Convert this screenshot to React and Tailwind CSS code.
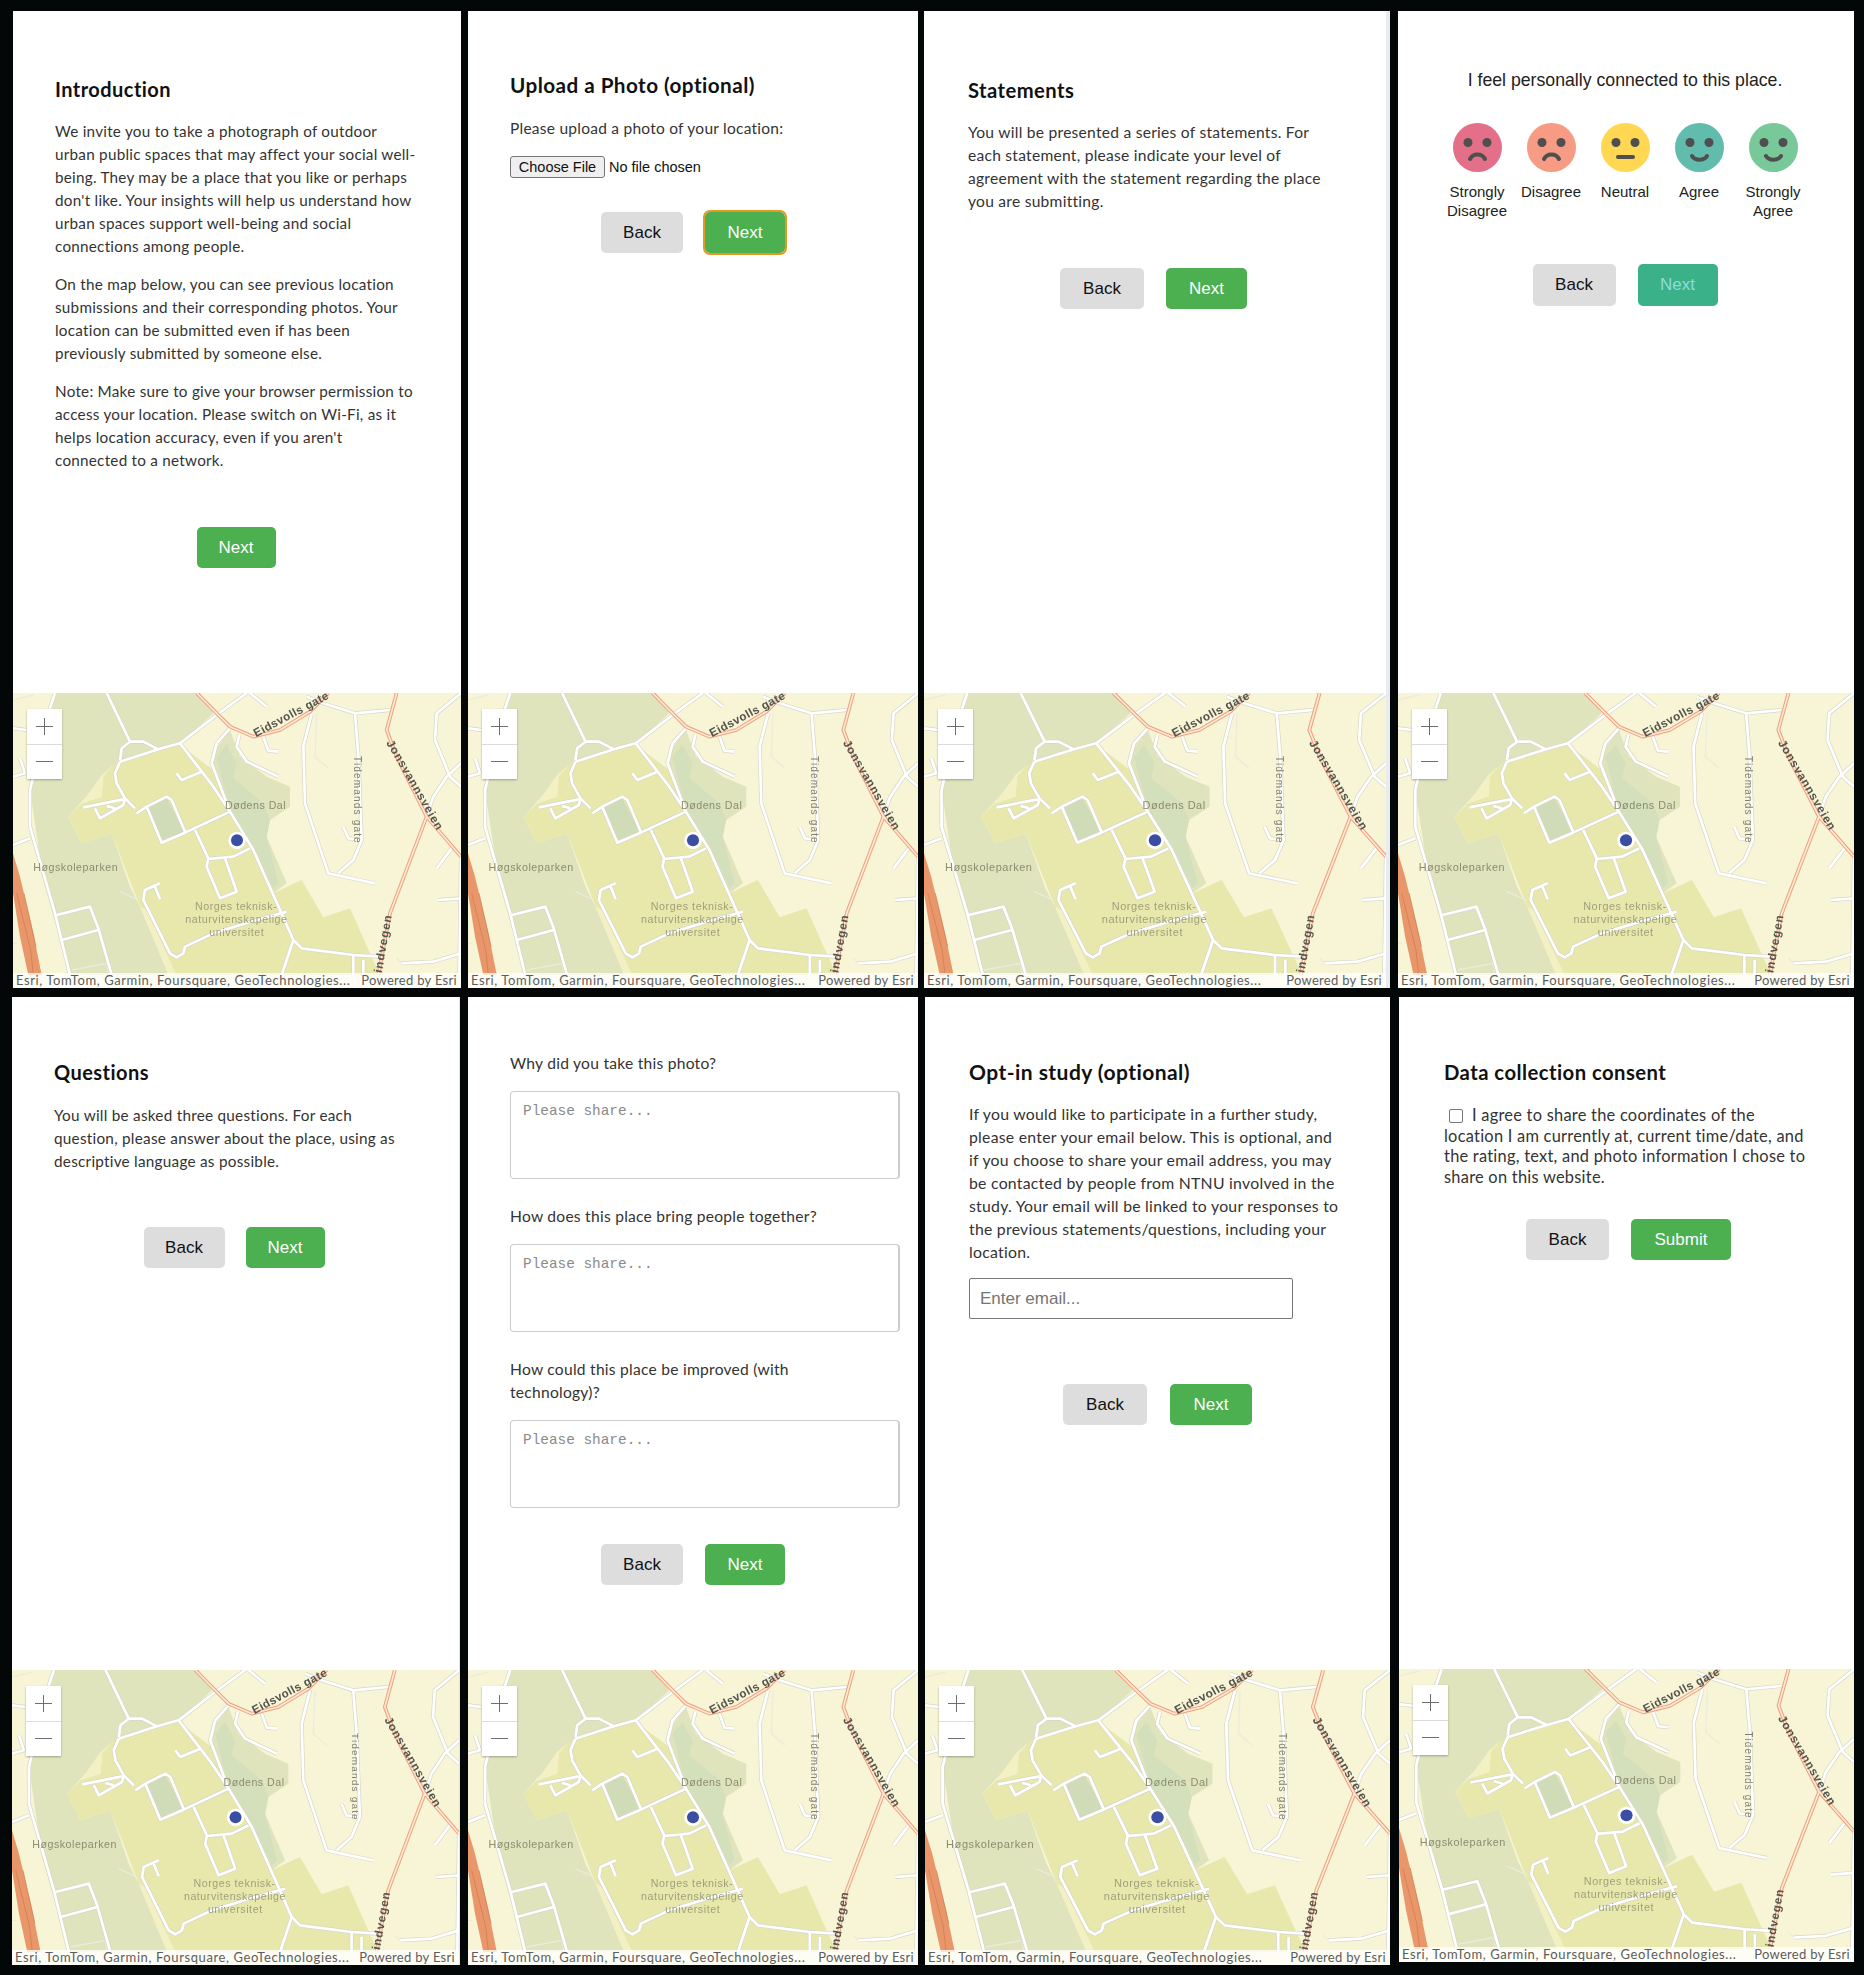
const roads = [
  '320,39 390,185',
  '360,240 365,205 390,185 430,185 475,208 540,190 650,105 740,39',
  '360,245 475,208',
  '360,245 345,280 350,310 375,355 405,385',
  '540,190 640,320 690,395 760,510 880,780 905,805 1060,825 1140,830',
  '250,382 370,358',
  '285,385 300,415 370,375 375,355',
  '320,378 345,385',
  '410,400 440,380 500,350 515,360 555,455',
  '440,380 485,488 555,458 690,395',
  '585,450 625,535 620,560 660,655 710,635 675,535',
  '625,537 700,530 750,505',
  '530,280 545,300 605,275',
  '480,610 435,630 430,660 510,820 530,832 550,820 555,800 640,760 770,720 860,695',
  '465,620 480,658',
  '690,145 650,190 635,250 690,395',
  '718,165 710,200 740,245 835,290',
  '790,170 805,212 835,215',
  '920,50 970,70 1065,100 1170,90',
  '935,100 910,200 915,370 985,580 1125,610',
  '1065,100 1075,225 1085,480 1060,540 1015,580',
  '1030,440 1045,475 1080,480',
  '1383,40 1310,100 1305,180 1350,290 1383,320',
  '1383,250 1340,290 1300,350 1280,410',
  '1355,505 1310,565',
  '1315,660 1383,655',
  '1205,850 1300,845 1383,820',
  '165,39 145,100 90,330 90,440 165,700 210,885',
  '39,145 80,150',
  '39,290 75,280 60,235',
  '39,495 90,475',
  '170,705 270,680 295,745 335,885',
  '185,780 295,750',
  '880,780 845,885',
  '1060,825 1060,885',
  '1090,840 1090,885',
  '1383,530 1378,885',
  '750,39 800,80',
]

const thinRoads = [
  '360,635 415,660',
  '950,100 945,230 985,265',
  '39,60 100,45',
  '1190,835 1205,850',
  '215,870 320,850 325,885',
  '39,790 52,790',
]

const mainRoads = [
  '590,39 650,100 690,140 760,170 840,150 930,95 985,39',
  '1190,39 1160,150 1190,230 1280,410 1383,530',
  '1280,410 1170,700 1135,885',
]

const MapView = ({ heightClass = 'h-[295px]' }) => (
  <div className={`relative shrink-0 overflow-hidden bg-[#f7f5d6] ${heightClass}`}>
    <svg viewBox="39 39 1344 885" preserveAspectRatio="none" className="block h-full w-full blur-[0.4px]">
      <rect x="39" y="39" width="1344" height="885" fill="#f7f5d6" />
      <polygon points="165,39 600,39 640,100 540,190 360,240 250,360 205,410 245,490 335,460 390,620 420,680 510,885 210,885 130,600 90,330" fill="#dfe4bd" />
      <polygon points="340,255 540,195 640,270 690,390 760,500 820,640 905,600 970,712 1050,685 1110,820 1140,885 510,885 420,680 335,460 245,490 205,410 245,370 305,350 310,290" fill="#e8e8ac" />
      <polygon points="245,370 305,285 340,255 310,290 305,350" fill="#f3f0c4" />
      <polygon points="420,680 440,690 530,885 505,885" fill="#f3f0c4" />
      <polygon points="645,210 690,150 720,230 800,290 870,320 870,380 810,420 800,470 860,610 820,640 760,500 690,390 640,270" fill="#dfe4bd" />
      <polygon points="650,230 680,195 710,250 700,295 790,370 810,420 800,470 835,610 820,625 760,500 690,390" fill="#d4dfbc" />
      <polygon points="445,385 500,355 555,455 485,485" fill="#d0dcb8" />
      <polygon points="39,520 60,590 100,760 125,885 85,885 60,770 39,640" fill="#e9976a" />
      <path d="M50 640L92 810L100 885M72 640L108 800" fill="none" stroke="#c9784f" strokeWidth="2" />
      {thinRoads.map((r) => (
        <polyline key={r} points={r} fill="none" stroke="#ecebdc" strokeWidth="4" strokeLinejoin="round" />
      ))}
      {roads.map((r) => (
        <polyline key={r} points={r} fill="none" stroke="#d6d6ca" strokeWidth="12" strokeLinejoin="round" />
      ))}
      {roads.map((r) => (
        <polyline key={`${r}-in`} points={r} fill="none" stroke="#ffffff" strokeWidth="8" strokeLinejoin="round" />
      ))}
      {mainRoads.map((r) => (
        <polyline key={r} points={r} fill="none" stroke="#ee9f80" strokeWidth="11" strokeLinejoin="round" />
      ))}
      {mainRoads.map((r) => (
        <polyline key={`${r}-in`} points={r} fill="none" stroke="#fbe9d0" strokeWidth="5" strokeLinejoin="round" />
      ))}
      <g fontFamily="'Liberation Sans', sans-serif" fontWeight="700" fill="#55554f">
        <text x="768" y="172" fontSize="35" textLength="250" transform="rotate(-28 768 172)">Eidsvolls gate</text>
        <text x="1158" y="188" fontSize="35" textLength="305" transform="rotate(60 1158 188)">Jonsvannsveien</text>
        <text x="1145" y="880" fontSize="35" textLength="175" transform="rotate(-80 1145 880)">indvegen</text>
      </g>
      <g fontFamily="'Liberation Sans', sans-serif" fill="#7f7f73">
        <text x="1062" y="228" fontSize="30" textLength="260" transform="rotate(90 1062 228)">Tidemands gate</text>
      </g>
      <g fontFamily="'Liberation Sans', sans-serif" fill="#8c8c6e" fontSize="32">
        <text x="675" y="387" textLength="182">Dødens Dal</text>
        <text x="100" y="574" textLength="253">Høgskoleparken</text>
      </g>
      <g fontFamily="'Liberation Sans', sans-serif" fill="#a09f7c" fontSize="32">
        <text x="585" y="691" textLength="245">Norges teknisk-</text>
        <text x="556" y="730" textLength="305">naturvitenskapelige</text>
        <text x="628" y="769" textLength="163">universitet</text>
      </g>
      <circle cx="711" cy="481" r="26" fill="#ffffff" />
      <circle cx="711" cy="481" r="18" fill="#3a4ea3" />
    </svg>
    <div className="absolute left-[14px] top-[16px] flex h-[70px] w-[35px] flex-col bg-white shadow-[0_1px_2px_rgba(0,0,0,0.3)]">
      <div className="flex flex-1 items-center justify-center border-b border-[#dcdcdc]">
        <svg width="17" height="17" viewBox="0 0 17 17"><path d="M8.5 0v17M0 8.5h17" stroke="#6e6e6e" strokeWidth="1" fill="none" /></svg>
      </div>
      <div className="flex flex-1 items-center justify-center">
        <svg width="17" height="17" viewBox="0 0 17 17"><path d="M0 8.5h17" stroke="#6e6e6e" strokeWidth="1" fill="none" /></svg>
      </div>
    </div>
    <div className="absolute inset-x-0 bottom-0 flex h-[15px] items-center justify-between bg-white/75 pl-[3px] pr-[4px] font-['Lato',sans-serif] text-[13px] leading-none text-[#5c5c5c]">
      <span className="tracking-[0.6px]">Esri, TomTom, Garmin, Foursquare, GeoTechnologies...</span>
      <span className="tracking-[0.3px]">Powered by Esri</span>
    </div>
  </div>
)

const Heading = ({ children, className = 'text-[20px]' }) => (
  <h2 className={`font-['Lato',sans-serif] font-bold leading-[28px] tracking-[0.45px] text-[#111] ${className}`}>{children}</h2>
)

const Para = ({ children, size = 'text-[15.5px]', className = '' }) => (
  <p className={`whitespace-nowrap font-['Lato',sans-serif] leading-[23px] tracking-[0.25px] text-[#333] ${size} ${className}`}>{children}</p>
)

const Btn = ({ label, className = '' }) => (
  <button className={`flex h-[41px] items-center justify-center rounded-[5px] font-['Liberation_Sans',sans-serif] text-[17px] ${className}`}>{label}</button>
)

const BackBtn = ({ className = 'w-[82px]' }) => <Btn label="Back" className={`bg-[#dddddd] text-[#111] ${className}`} />
const NextBtn = ({ label = 'Next', className = 'w-[80px]' }) => <Btn label={label} className={`bg-[#4caf50] text-white ${className}`} />

const Panel = ({ className = '', mapHeight, children }) => (
  <div className={`flex flex-col bg-white ${className}`}>
    <div className="min-h-0 flex-1">{children}</div>
    <MapView heightClass={mapHeight} />
  </div>
)

const Face = ({ color, mouth, label }) => (
  <div className="flex w-[74px] flex-col items-center">
    <svg width="49" height="49" viewBox="0 0 49 49">
      <circle cx="24.5" cy="24.5" r="24.5" fill={color} />
      <circle cx="15" cy="19.5" r="4.5" fill="#4f4f4f" />
      <circle cx="34" cy="19.5" r="4.5" fill="#4f4f4f" />
      <path d={mouth} fill="none" stroke="#4f4f4f" strokeWidth="4" strokeLinecap="round" />
    </svg>
    <span className="mt-[11px] text-center font-['Liberation_Sans',sans-serif] text-[15px] leading-[18.5px] text-[#222]">{label}</span>
  </div>
)

const frown = 'M17 36c3-6 12-6 15 0'
const smile = 'M17 33c3 5 12 5 15 0'

const Question = ({ children, className = '' }) => (
  <div className={className}>
    <Para size="text-[15.6px]">{children}</Para>
    <textarea
      placeholder="Please share..."
      className="mt-[16px] block h-[88px] w-[390px] resize-none rounded-[4px] border border-r-2 border-[#cccccc] px-[12px] py-[9px] font-['Liberation_Mono',monospace] text-[14.4px] leading-[20px] placeholder:text-[#8a8a8a]"
    />
  </div>
)

export default function App() {
  return (
    <div className="flex h-[1975px] w-[1864px] flex-col gap-[9px] bg-[#030707] pt-[11px]">
      <div className="flex h-[977px] pl-[13px]">
        <Panel className="w-[448px]">
          <div className="pl-[42px] pt-[64px]">
            <Heading>Introduction</Heading>
            <Para size="text-[15.25px]" className="mt-[17px]">We invite you to take a photograph of outdoor<br />urban public spaces that may affect your social well-<br />being. They may be a place that you like or perhaps<br />don't like. Your insights will help us understand how<br />urban spaces support well-being and social<br />connections among people.</Para>
            <Para size="text-[15.25px]" className="mt-[15px]">On the map below, you can see previous location<br />submissions and their corresponding photos. Your<br />location can be submitted even if has been<br />previously submitted by someone else.</Para>
            <Para size="text-[15.25px]" className="mt-[15px]">Note: Make sure to give your browser permission to<br />access your location. Please switch on Wi-Fi, as it<br />helps location accuracy, even if you aren't<br />connected to a network.</Para>
            <div className="mt-[55px] flex justify-center pr-[44px]"><NextBtn className="w-[79px]" /></div>
          </div>
        </Panel>
        <Panel className="ml-[7px] w-[450px]">
          <div className="px-[42px] pt-[60px]">
            <Heading className="text-[20.7px]">Upload a Photo (optional)</Heading>
            <Para className="mt-[18px]">Please upload a photo of your location:</Para>
            <input
              type="file"
              className="mt-[16px] block h-[22px] w-[300px] font-['Liberation_Sans',sans-serif] text-[14.5px] text-[#111] file:mr-[4px] file:h-[22px] file:w-[95px] file:rounded-[3px] file:border file:border-[#767676] file:bg-[#efefef] file:text-[14.5px] file:text-[#111]"
            />
            <div className="mt-[34px] flex justify-center gap-[22px]">
              <BackBtn />
              <NextBtn className="w-[80px] outline-2 outline-[#e8981f]" />
            </div>
          </div>
        </Panel>
        <Panel className="ml-[6px] w-[466px] border-r-4 border-[#e8ecef]">
          <div className="pl-[44px] pr-[47px] pt-[65px]">
            <Heading className="text-[20.2px]">Statements</Heading>
            <Para size="text-[15.6px]" className="mt-[17px]">You will be presented a series of statements. For<br />each statement, please indicate your level of<br />agreement with the statement regarding the place<br />you are submitting.</Para>
            <div className="mt-[55px] flex justify-center gap-[22px]">
              <BackBtn className="w-[84px]" />
              <NextBtn className="w-[81px]" />
            </div>
          </div>
        </Panel>
        <Panel className="ml-[8px] w-[456px]">
          <div className="pr-[2px] pt-[57px]">
            <p className="text-center font-['Liberation_Sans',sans-serif] text-[17.7px] leading-[24px] text-[#222]">I feel personally connected to this place.</p>
            <div className="mt-[31px] flex justify-center">
              <Face color="#e36f88" mouth={frown} label="Strongly Disagree" />
              <Face color="#f79b85" mouth={frown} label="Disagree" />
              <Face color="#ffd753" mouth="M17 34h15" label="Neutral" />
              <Face color="#62bcae" mouth={smile} label="Agree" />
              <Face color="#78c89a" mouth={smile} label="Strongly Agree" />
            </div>
            <div className="mt-[44px] flex justify-center gap-[22px]">
              <BackBtn className="h-[42px] w-[83px]" />
              <Btn label="Next" className="h-[42px] w-[80px] bg-[#3bb18a] text-[#8fdcd8]" />
            </div>
          </div>
        </Panel>
      </div>
      <div className="flex h-[968px] pl-[12px]">
        <Panel className="w-[448px] border-r border-[#e4e4e4]">
          <div className="pl-[42px] pt-[61px]">
            <Heading>Questions</Heading>
            <Para size="text-[15.3px]" className="mt-[18px]">You will be asked three questions. For each<br />question, please answer about the place, using as<br />descriptive language as possible.</Para>
            <div className="mt-[54px] flex justify-center gap-[21px] pr-[45px]">
              <BackBtn className="w-[81px]" />
              <NextBtn className="w-[79px]" />
            </div>
          </div>
        </Panel>
        <Panel className="ml-[8px] w-[450px]">
          <div className="px-[42px] pt-[55px]">
            <Question>Why did you take this photo?</Question>
            <Question className="mt-[26px]">How does this place bring people together?</Question>
            <Question className="mt-[26px]">How could this place be improved (with<br />technology)?</Question>
            <div className="mt-[36px] flex justify-center gap-[22px]">
              <BackBtn />
              <NextBtn />
            </div>
          </div>
        </Panel>
        <Panel className="ml-[7px] w-[465px]">
          <div className="px-[44px] pt-[61px]">
            <Heading className="text-[21px]">Opt-in study (optional)</Heading>
            <Para size="text-[15.8px]" className="mt-[16px]">If you would like to participate in a further study,<br />please enter your email below. This is optional, and<br />if you choose to share your email address, you may<br />be contacted by people from NTNU involved in the<br />study. Your email will be linked to your responses to<br />the previous statements/questions, including your<br />location.</Para>
            <input
              placeholder="Enter email..."
              className="mt-[15px] block h-[41px] w-[324px] rounded-[2px] border border-[#767676] px-[10px] font-['Liberation_Sans',sans-serif] text-[17px] placeholder:text-[#757575]"
            />
            <div className="mt-[65px] flex justify-center gap-[23px]">
              <BackBtn className="w-[84px]" />
              <NextBtn className="w-[82px]" />
            </div>
          </div>
        </Panel>
        <Panel className="ml-[9px] h-[965px] w-[455px]" mapHeight="h-[293px]">
          <div className="pl-[45px] pt-[61px]">
            <Heading className="text-[20.3px]">Data collection consent</Heading>
            <div className="mt-[19px] whitespace-nowrap font-['Lato',sans-serif] text-[16.4px] leading-[20.5px] tracking-[0.25px] text-[#333]">
              <input type="checkbox" className="mx-[5px] mr-[9px] inline-block h-[14px] w-[14px] appearance-none rounded-[2px] border border-[#767676] align-[-2px]" />
              I agree to share the coordinates of the<br />location I am currently at, current time/date, and<br />the rating, text, and photo information I chose to<br />share on this website.
            </div>
            <div className="mt-[32px] flex justify-center gap-[22px] pr-[41px]">
              <BackBtn className="w-[83px]" />
              <NextBtn label="Submit" className="w-[100px]" />
            </div>
          </div>
        </Panel>
      </div>
    </div>
  )
}
